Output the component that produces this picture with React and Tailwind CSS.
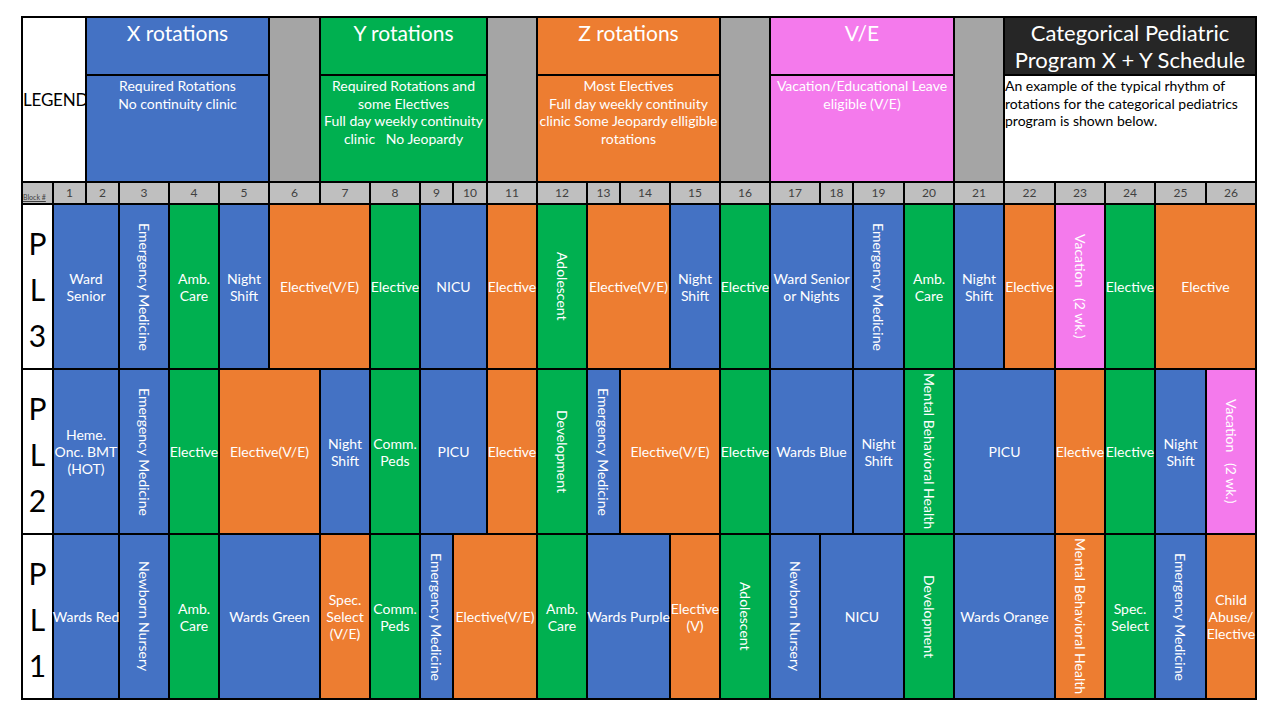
import React from "react";

const C = {
  b: "bg-[#4472c4] text-white",
  g: "bg-[#00b050] text-white",
  o: "bg-[#ed7d31] text-white",
  p: "bg-[#f47aec] text-white",
};
const SPAN = { 1: "col-span-1", 2: "col-span-2" };

// [color, span, text(lines array or string), vertical?]
const ROWS = [
  {
    label: "3",
    cells: [
      ["b", 2, ["Ward", "Senior"]],
      ["b", 1, "Emergency Medicine", true],
      ["g", 1, ["Amb.", "Care"]],
      ["b", 1, ["Night", "Shift"]],
      ["o", 2, ["Elective(V/E)"]],
      ["g", 1, ["Elective"]],
      ["b", 2, ["NICU"]],
      ["o", 1, ["Elective"]],
      ["g", 1, "Adolescent", true],
      ["o", 2, ["Elective(V/E)"]],
      ["b", 1, ["Night", "Shift"]],
      ["g", 1, ["Elective"]],
      ["b", 2, ["Ward Senior", "or Nights"]],
      ["b", 1, "Emergency Medicine", true],
      ["g", 1, ["Amb.", "Care"]],
      ["b", 1, ["Night", "Shift"]],
      ["o", 1, ["Elective"]],
      ["p", 1, "Vacation   (2 wk.)", true],
      ["g", 1, ["Elective"]],
      ["o", 2, ["Elective"]],
    ],
  },
  {
    label: "2",
    cells: [
      ["b", 2, ["Heme.", "Onc. BMT", "(HOT)"]],
      ["b", 1, "Emergency Medicine", true],
      ["g", 1, ["Elective"]],
      ["o", 2, ["Elective(V/E)"]],
      ["b", 1, ["Night", "Shift"]],
      ["g", 1, ["Comm.", "Peds"]],
      ["b", 2, ["PICU"]],
      ["o", 1, ["Elective"]],
      ["g", 1, "Development", true],
      ["b", 1, "Emergency Medicine", true],
      ["o", 2, ["Elective(V/E)"]],
      ["g", 1, ["Elective"]],
      ["b", 2, ["Wards Blue"]],
      ["b", 1, ["Night", "Shift"]],
      ["g", 1, "Mental Behavioral Health", true],
      ["b", 2, ["PICU"]],
      ["o", 1, ["Elective"]],
      ["g", 1, ["Elective"]],
      ["b", 1, ["Night", "Shift"]],
      ["p", 1, "Vacation   (2 wk.)", true],
    ],
  },
  {
    label: "1",
    cells: [
      ["b", 2, ["Wards Red"]],
      ["b", 1, "Newborn Nursery", true],
      ["g", 1, ["Amb.", "Care"]],
      ["b", 2, ["Wards Green"]],
      ["o", 1, ["Spec.", "Select", "(V/E)"]],
      ["g", 1, ["Comm.", "Peds"]],
      ["b", 1, "Emergency Medicine", true],
      ["o", 2, ["Elective(V/E)"]],
      ["g", 1, ["Amb.", "Care"]],
      ["b", 2, ["Wards Purple"]],
      ["o", 1, ["Elective", "(V)"]],
      ["g", 1, "Adolescent", true],
      ["b", 1, "Newborn Nursery", true],
      ["b", 2, ["NICU"]],
      ["g", 1, "Development", true],
      ["b", 2, ["Wards Orange"]],
      ["o", 1, "Mental Behavioral Health", true],
      ["g", 1, ["Spec.", "Select"]],
      ["b", 1, "Emergency Medicine", true],
      ["o", 1, ["Child", "Abuse/", "Elective"]],
    ],
  },
];

const cellBase = "border-r-2 border-b-2 border-black";

function Lines({ lines }) {
  return lines.map((l, i) => (
    <React.Fragment key={i}>
      {i > 0 && <br />}
      {l}
    </React.Fragment>
  ));
}

function HeaderTitle({ color, children }) {
  return (
    <div className={`${cellBase} col-span-4 ${color} flex justify-center pt-[1px] text-[21px] leading-[28px] whitespace-nowrap`}>
      {children}
    </div>
  );
}

function HeaderDesc({ color, lines, extra = "" }) {
  return (
    <div className={`${cellBase} col-span-4 ${color} ${extra} text-center pt-[1px] text-[14px] leading-[17.5px] whitespace-pre`}>
      <Lines lines={lines} />
    </div>
  );
}

function Gray() {
  return <div className={`${cellBase} row-span-2 bg-[#a5a5a5]`} />;
}

export default function App() {
  const blocks = Array.from({ length: 26 }, (_, i) => i + 1);
  return (
    <div className="w-[1280px] h-[720px] bg-white pl-[21px] pt-[16px] [font-family:Lato,'Liberation_Sans',sans-serif]">
      <div className="grid w-max border-l-2 border-t-2 border-black grid-cols-[31px_33px_33px_50px_50px_50px_51px_50px_50px_33px_34px_50px_50px_33px_50px_50px_50px_50px_33px_51px_50px_50px_51px_50px_50px_51px_50px] grid-rows-[58px_107px_22px_165px_165px_165px]">
        {/* Header row 1 */}
        <div className={`${cellBase} col-span-2 row-span-2 bg-white flex items-center text-black text-[17px] tracking-[-0.2px]`}>
          LEGEND
        </div>
        <HeaderTitle color={C.b}>X rotations</HeaderTitle>
        <Gray />
        <HeaderTitle color={C.g}>Y rotations</HeaderTitle>
        <Gray />
        <HeaderTitle color={C.o}>Z rotations</HeaderTitle>
        <Gray />
        <HeaderTitle color={C.p}>V/E</HeaderTitle>
        <Gray />
        <div className={`${cellBase} col-span-5 bg-[#262626] text-white text-center pt-[1px] text-[22px] leading-[27px] whitespace-nowrap`}>
          Categorical Pediatric
          <br />
          Program X + Y Schedule
        </div>

        {/* Header row 2 */}
        <HeaderDesc color={C.b} lines={["Required Rotations", "No continuity clinic"]} />
        <HeaderDesc
          color={C.g}
          lines={["Required Rotations and", "some Electives", "Full day weekly continuity", "clinic   No Jeopardy"]}
        />
        <HeaderDesc
          color={C.o}
          lines={["Most Electives", "Full day weekly continuity", "clinic Some Jeopardy elligible", "rotations"]}
        />
        <HeaderDesc color={C.p} lines={["Vacation/Educational Leave", "eligible (V/E)"]} />
        <div className={`${cellBase} col-span-5 bg-white text-black text-left pl-[0px] pt-[1px] text-[14px] leading-[17.5px] whitespace-nowrap`}>
          An example of the typical rhythm of
          <br />
          rotations for the categorical pediatrics
          <br />
          program is shown below.
        </div>

        {/* Block row */}
        <div className={`${cellBase} bg-[#bfbfbf] flex items-end pb-[1px] text-[7px] leading-[9px] text-[#404040] whitespace-nowrap overflow-hidden`}>
          <span className="underline">Block #</span>
        </div>
        {blocks.map((n) => (
          <div key={n} className={`${cellBase} bg-[#bfbfbf] flex items-center justify-center text-[12px] text-[#404040]`}>
            {n}
          </div>
        ))}

        {/* PL rows */}
        {ROWS.map((row) => (
          <React.Fragment key={row.label}>
            <div className={`${cellBase} bg-white flex flex-col items-center justify-center pt-[5px] text-black text-[30px] leading-[46px]`}>
              <span>P</span>
              <span>L</span>
              <span>{row.label}</span>
            </div>
            {row.cells.map(([col, span, text, vertical], i) => (
              <div
                key={i}
                className={`${cellBase} ${SPAN[span]} ${C[col]} flex items-center justify-center text-center text-[14px] leading-[17px] whitespace-nowrap`}
              >
                {vertical ? (
                  <span className="[writing-mode:vertical-rl] whitespace-pre">{text}</span>
                ) : (
                  <span>
                    <Lines lines={text} />
                  </span>
                )}
              </div>
            ))}
          </React.Fragment>
        ))}
      </div>
    </div>
  );
}
